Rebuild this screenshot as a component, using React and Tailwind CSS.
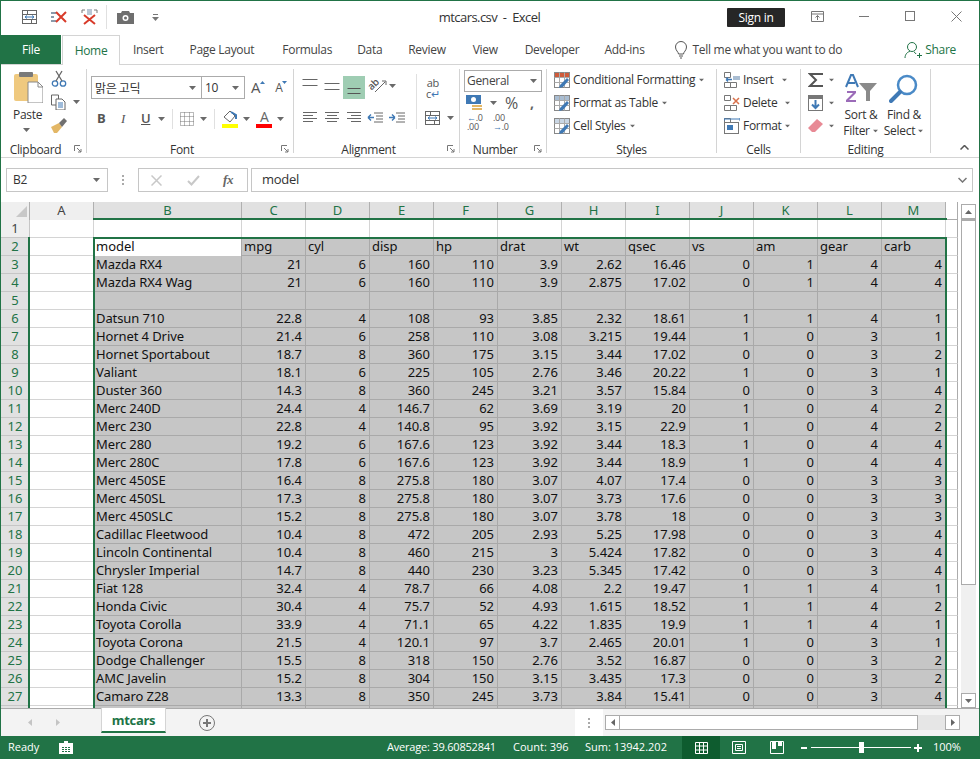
import React from "react";

const ui = { fontFamily: '"Open Sans", "Noto Sans", sans-serif' };

const columns = [
  { name: "A", w: "w-[64px]" },
  { name: "B", w: "w-[148px]" },
  { name: "C", w: "w-[64px]" },
  { name: "D", w: "w-[64px]" },
  { name: "E", w: "w-[64px]" },
  { name: "F", w: "w-[64px]" },
  { name: "G", w: "w-[64px]" },
  { name: "H", w: "w-[64px]" },
  { name: "I", w: "w-[64px]" },
  { name: "J", w: "w-[64px]" },
  { name: "K", w: "w-[64px]" },
  { name: "L", w: "w-[64px]" },
  { name: "M", w: "w-[64px]" },
];

const head = ["model", "mpg", "cyl", "disp", "hp", "drat", "wt", "qsec", "vs", "am", "gear", "carb"];

const rows = [
  ["Mazda RX4", 21, 6, 160, 110, 3.9, 2.62, 16.46, 0, 1, 4, 4],
  ["Mazda RX4 Wag", 21, 6, 160, 110, 3.9, 2.875, 17.02, 0, 1, 4, 4],
  null,
  ["Datsun 710", 22.8, 4, 108, 93, 3.85, 2.32, 18.61, 1, 1, 4, 1],
  ["Hornet 4 Drive", 21.4, 6, 258, 110, 3.08, 3.215, 19.44, 1, 0, 3, 1],
  ["Hornet Sportabout", 18.7, 8, 360, 175, 3.15, 3.44, 17.02, 0, 0, 3, 2],
  ["Valiant", 18.1, 6, 225, 105, 2.76, 3.46, 20.22, 1, 0, 3, 1],
  ["Duster 360", 14.3, 8, 360, 245, 3.21, 3.57, 15.84, 0, 0, 3, 4],
  ["Merc 240D", 24.4, 4, 146.7, 62, 3.69, 3.19, 20, 1, 0, 4, 2],
  ["Merc 230", 22.8, 4, 140.8, 95, 3.92, 3.15, 22.9, 1, 0, 4, 2],
  ["Merc 280", 19.2, 6, 167.6, 123, 3.92, 3.44, 18.3, 1, 0, 4, 4],
  ["Merc 280C", 17.8, 6, 167.6, 123, 3.92, 3.44, 18.9, 1, 0, 4, 4],
  ["Merc 450SE", 16.4, 8, 275.8, 180, 3.07, 4.07, 17.4, 0, 0, 3, 3],
  ["Merc 450SL", 17.3, 8, 275.8, 180, 3.07, 3.73, 17.6, 0, 0, 3, 3],
  ["Merc 450SLC", 15.2, 8, 275.8, 180, 3.07, 3.78, 18, 0, 0, 3, 3],
  ["Cadillac Fleetwood", 10.4, 8, 472, 205, 2.93, 5.25, 17.98, 0, 0, 3, 4],
  ["Lincoln Continental", 10.4, 8, 460, 215, 3, 5.424, 17.82, 0, 0, 3, 4],
  ["Chrysler Imperial", 14.7, 8, 440, 230, 3.23, 5.345, 17.42, 0, 0, 3, 4],
  ["Fiat 128", 32.4, 4, 78.7, 66, 4.08, 2.2, 19.47, 1, 1, 4, 1],
  ["Honda Civic", 30.4, 4, 75.7, 52, 4.93, 1.615, 18.52, 1, 1, 4, 2],
  ["Toyota Corolla", 33.9, 4, 71.1, 65, 4.22, 1.835, 19.9, 1, 1, 4, 1],
  ["Toyota Corona", 21.5, 4, 120.1, 97, 3.7, 2.465, 20.01, 1, 0, 3, 1],
  ["Dodge Challenger", 15.5, 8, 318, 150, 2.76, 3.52, 16.87, 0, 0, 3, 2],
  ["AMC Javelin", 15.2, 8, 304, 150, 3.15, 3.435, 17.3, 0, 0, 3, 2],
  ["Camaro Z28", 13.3, 8, 350, 245, 3.73, 3.84, 15.41, 0, 0, 3, 4],
];

const Caret = ({ className = "" }) => (
  <svg width="7" height="4" viewBox="0 0 7 4" className={className}>
    <path d="M0 0h7L3.5 4z" fill="#6a6a6a" />
  </svg>
);

const Launcher = () => (
  <svg width="8" height="8" viewBox="0 0 8 8" className="absolute right-[4px] bottom-[0px]" fill="none" stroke="#777">
    <path d="M.5 6V.5H6" />
    <path d="M3 3l4 4M7 4v3H4" />
  </svg>
);

const Group = ({ label, w, children, launcher }) => (
  <div className={`${w} relative flex flex-col border-r border-[#d4d4d4] mt-[4px] mb-[4px]`}>
    <div className="flex-1 min-h-0">{children}</div>
    <div className={`h-[18px] mb-[-6px] text-center text-[12px] leading-[18px] text-[#333] ${launcher ? "pr-[16px]" : ""}`}>{label}</div>
    {launcher && <Launcher />}
  </div>
);

const Lines = ({ widths, gap = 3, align = "left", color = "#666" }) => (
  <svg width="16" height="14" viewBox="0 0 16 14">
    {widths.map((w, i) => (
      <rect
        key={i}
        x={align === "left" ? 1 : align === "right" ? 15 - w : 8 - w / 2}
        y={1 + i * gap}
        width={w}
        height="1"
        fill={color}
      />
    ))}
  </svg>
);

const WrapIcon = () => (
  <svg width="16" height="16" viewBox="0 0 16 16" fill="none">
    <rect x=".5" y="1.5" width="14" height="13" fill="#fff" stroke="#666" />
    <path d="M.5 5.500h14M.5 10.500h14M5.500 1.500v4M9.500 10.500v4" stroke="#666" />
    <path d="M3 8h9M3 8l2-1.500M3 8l2 1.500M12 8l-2-1.500M12 8l-2 1.500" stroke="#3f79b5" />
  </svg>
);

const ClearIcon = ({ vertical }) => (
  <svg width="17" height="16" viewBox="0 0 17 16" fill="none">
    {vertical ? (
      <>
        <path d="M1 4V1h3M16 4V1h-3" stroke="#777" />
        <rect x="6" y="0" width="5" height="6" fill="#b9c6d4" />
        <path d="M3 6l11 9M14 6L3 15" stroke="#d83b2a" strokeWidth="2" />
      </>
    ) : (
      <>
        <path d="M1 4h5M1 12h5M1 8h3" stroke="#8a9aaa" strokeWidth="2" />
        <path d="M6 3l10 10M16 3L6 13" stroke="#d83b2a" strokeWidth="2" />
      </>
    )}
  </svg>
);

function TitleBar() {
  return (
    <div className="h-[34px] flex items-center relative shrink-0">
      <div className="flex items-center ml-[21px] w-[140px] h-full">
        <div className="w-[16px] mt-[-2px]"><WrapIcon /></div>
        <div className="ml-[12px] mt-[-3px]"><ClearIcon /></div>
        <div className="ml-[14px] mt-[-3px]"><ClearIcon vertical /></div>
        <div className="w-px h-[24px] bg-[#e0e0e0] ml-[8px] mt-[-2px]" />
        <svg width="17" height="14" viewBox="0 0 17 14" className="ml-[10px] mt-[-2px]">
          <path d="M0 3h4l1-2h7l1 2h4v11H0z" fill="#6e6e6e" />
          <circle cx="8.500" cy="8" r="3" fill="#fff" />
          <circle cx="8.500" cy="8" r="1.500" fill="#6e6e6e" />
        </svg>
        <svg width="7" height="7" viewBox="0 0 7 7" className="ml-[18px] mt-[-1px]">
          <path d="M0 3h7L3.500 7z" fill="#777" />
          <rect x="1" y="0" width="5" height="1" fill="#777" />
        </svg>
      </div>
      <div className="flex-1 text-center text-[13px] tracking-[-0.55px] text-[#333] pl-[90px] mt-[-1px]">mtcars.csv&nbsp; - &nbsp;Excel</div>
      <div className="flex items-center mt-[-2px]">
        <div className="w-[58px] h-[19px] bg-[#262626] rounded-[1px] text-white text-[12px] leading-[19px] text-center">Sign in</div>
        <svg width="13" height="11" viewBox="0 0 13 11" fill="none" className="ml-[26px] mt-[-2px]">
          <path d="M.5.500h12v10H.5zM.5 3h12M6.500 9V4.500M4.500 6.500l2-2 2 2" stroke="#777" />
        </svg>
        <div className="w-[10px] h-px bg-[#777] ml-[35px] mt-[-2px]" />
        <div className="w-[10px] h-[10px] border border-[#777] ml-[36px] mt-[-2px]" />
        <svg width="11" height="11" viewBox="0 0 11 11" fill="none" stroke="#777" className="ml-[36px] mr-[17px] mt-[-2px]">
          <path d="M.5.500l10 10M10.500.500l-10 10" />
        </svg>
      </div>
    </div>
  );
}

function TabBar() {
  const tabs = [
    ["Insert", "ml-[13px]"],
    ["Page Layout", "ml-[26px]"],
    ["Formulas", "ml-[28px]"],
    ["Data", "ml-[25px]"],
    ["Review", "ml-[26px]"],
    ["View", "ml-[27px]"],
    ["Developer", "ml-[27px]"],
    ["Add-ins", "ml-[25px]"],
  ];
  return (
    <div className="h-[30px] flex items-stretch text-[12px] text-[#444] relative shrink-0 border-b border-[#d4d4d4]">
      <div className="w-[60px] h-[29px] bg-[#217346] text-white flex items-center justify-center">File</div>
      <div className="w-[58px] h-[30px] ml-[1px] bg-white border border-b-0 border-[#d4d4d4] text-[#217346] flex items-center justify-center">Home</div>
      {tabs.map(([t, m]) => (
        <div key={t} className={`${m} flex items-center h-[29px]`}>{t}</div>
      ))}
      <div className="flex items-center h-[29px] ml-[29px]">
        <svg width="14" height="18" viewBox="0 0 14 18" fill="none" stroke="#555">
          <path d="M4.500 13c0-2-3-3.500-3-7a5.500 5.500 0 0 1 11 0c0 3.500-3 5-3 7zM5 15h4M6 17h2" />
        </svg>
        <span className="ml-[5px]">Tell me what you want to do</span>
      </div>
      <div className="flex items-center h-[29px] ml-[auto] mr-[23px] text-[#217346]">
        <svg width="19" height="18" viewBox="0 0 19 18" fill="none" stroke="#217346">
          <circle cx="8" cy="6" r="4.500" />
          <path d="M1 17c0-4 3-6.500 5-6.500M10 11c1 .5 1.500 1 2 2M13 14.500h5M15.500 12v5" />
        </svg>
        <span className="ml-[2px]">Share</span>
      </div>
    </div>
  );
}

function ClipboardGroup() {
  return (
    <div className="flex pl-[12px] pt-[2px]">
      <div className="w-[38px] flex flex-col items-start">
        <svg width="30" height="32" viewBox="0 0 30 32">
          <rect x="1" y="3" width="24" height="27" rx="2" fill="#efc97f" />
          <rect x="6" y="1" width="14" height="5" rx="1" fill="#7a7a7a" />
          <path d="M15 11h10l5 5v16H15z" fill="#fff" stroke="#888" />
          <path d="M25 11v5h5" fill="none" stroke="#888" />
        </svg>
        <span className="text-[12px] leading-[16px] mt-[4px] text-[#333]">Paste</span>
        <Caret className="ml-[10px] mt-[5px]" />
      </div>
      <div className="flex flex-col mt-[-1px] gap-[7px] items-start">
        <svg width="16" height="17" viewBox="0 0 16 17" fill="none" stroke="#3f79b5" strokeWidth="1.300">
          <circle cx="4" cy="13.500" r="2.700" />
          <circle cx="12" cy="13.500" r="2.700" />
          <path d="M5 11L11 1M11 11L5 1" stroke="#666" />
        </svg>
        <div className="flex items-center">
          <svg width="15" height="16" viewBox="0 0 15 16" fill="#fff" stroke="#666">
            <path d="M.5 1h7v10h-7z" />
            <path d="M5 5h6l3 3v8H5z" />
            <path d="M7 9h5M7 11h5M7 13h5" stroke="#3f79b5" />
          </svg>
          <Caret className="ml-[7px]" />
        </div>
        <svg width="16" height="15" viewBox="0 0 16 15" className="mt-[1px]">
          <path d="M0 9l8-4 3 4-5 6H3z" fill="#e3b766" />
          <path d="M8 5l5-5 3 3-5 6z" fill="#707070" />
        </svg>
      </div>
    </div>
  );
}

function FontGroup() {
  return (
    <div className="pl-[4px] pt-[7px]">
      <div className="flex items-center">
        <div className="w-[111px] h-[23px] border border-[#ababab] flex items-center justify-between pl-[3px] pr-[5px] text-[12px] text-[#333]" style={{ fontFamily: '"Noto Sans CJK KR", sans-serif' }}>
          맑은 고딕<Caret />
        </div>
        <div className="w-[43px] h-[23px] border border-[#ababab] border-l-0 flex items-center justify-between pl-[3px] pr-[5px] text-[12px] text-[#333]">
          10<Caret />
        </div>
        <div className="flex items-start ml-[6px] text-[#555] text-[14px] leading-[18px]">
          <span className="text-[15px]">A</span>
          <svg width="5" height="3" viewBox="0 0 5 3" className="mt-[3px]"><path d="M0 3h5L2.500 0z" fill="#3f79b5" /></svg>
          <span className="ml-[10px] mt-[1px] text-[12px]">A</span>
          <svg width="5" height="3" viewBox="0 0 5 3" className="mt-[3px]"><path d="M0 0h5L2.500 3z" fill="#3f79b5" /></svg>
        </div>
      </div>
      <div className="flex items-center mt-[9px] h-[22px] text-[#555]">
        <span className="ml-[6px] w-[14px] font-bold text-[13px]">B</span>
        <span className="ml-[10px] w-[12px] italic text-[13px]" style={{ fontFamily: '"Liberation Serif", serif' }}>I</span>
        <span className="ml-[8px] underline text-[13px] font-semibold">U</span>
        <Caret className="ml-[8px]" />
        <div className="w-px h-[20px] bg-[#e0e0e0] ml-[7px]" />
        <svg width="14" height="14" viewBox="0 0 14 14" fill="none" stroke="#777" strokeDasharray="1 1" className="ml-[7px]">
          <path d="M.5.500h13v13h-13zM.500 4.500h13M.500 9.500h13M4.500.500v13M9.500.500v13" />
        </svg>
        <Caret className="ml-[6px]" />
        <div className="w-px h-[20px] bg-[#e0e0e0] ml-[7px]" />
        <div className="ml-[7px] w-[16px] flex flex-col items-center">
          <svg width="14" height="14" viewBox="0 0 14 14" fill="none">
            <path d="M1 7l6-6 5 5-5 6z" fill="#fff" stroke="#666" />
            <path d="M8 2l5 3v4" stroke="#3f79b5" strokeWidth="2" />
          </svg>
          <div className="w-[16px] h-[4px] bg-[#ffff00]" />
        </div>
        <Caret className="ml-[5px]" />
        <div className="ml-[6px] w-[16px] flex flex-col items-center">
          <span className="text-[14px] leading-[14px] text-[#666]">A</span>
          <div className="w-[16px] h-[4px] bg-[#ff0000]" />
        </div>
        <Caret className="ml-[5px]" />
      </div>
    </div>
  );
}

function AlignGroup() {
  return (
    <div className="pl-[5px] pt-[4px] flex">
      <div className="grid grid-cols-[22px_22px_22px_44px] auto-rows-[30px] items-center justify-items-center w-[110px]">
        <div className="self-start mt-[5px]"><Lines widths={[15, 15]} gap={6} align="center" /></div>
        <div className="self-start mt-[9px]"><Lines widths={[15, 15]} gap={6} align="center" /></div>
        <div className="self-start w-[22px] h-[23px] bg-[#9fcdb3] flex items-start justify-center pt-[11px] mt-[3px]"><Lines widths={[13, 13]} gap={5} align="center" color="#555" /></div>
        <div className="flex items-center justify-self-start ml-[2px] self-start mt-[5px]">
          <div className="relative w-[20px] h-[16px]">
            <span className="absolute left-[0px] top-[-1px] text-[10px] leading-[14px] font-semibold text-[#555] -rotate-45">ab</span>
            <svg width="20" height="16" viewBox="0 0 20 16" fill="none" stroke="#666" className="absolute left-0 top-0">
              <path d="M8 14L18 4M15 3h4v4" />
            </svg>
          </div>
          <Caret className="ml-[2px]" />
        </div>
        <Lines widths={[14, 10, 14, 10]} />
        <Lines widths={[14, 10, 14, 10]} align="center" />
        <Lines widths={[14, 10, 14, 10]} align="right" />
        <div className="flex items-center justify-self-start ml-[2px] gap-[6px]">
          <svg width="16" height="12" viewBox="0 0 16 12" fill="none">
            <path d="M7 1h9M9 4h7M9 7h7M7 10h9" stroke="#666" />
            <path d="M7 5.500H1M1 5.500l3-3M1 5.500l3 3" stroke="#3f79b5" strokeWidth="1.400" />
          </svg>
          <svg width="16" height="12" viewBox="0 0 16 12" fill="none">
            <path d="M7 1h9M9 4h7M9 7h7M7 10h9" stroke="#666" />
            <path d="M0 5.500h6M6 5.500l-3-3M6 5.500l-3 3" stroke="#3f79b5" strokeWidth="1.400" />
          </svg>
        </div>
      </div>
      <div className="w-px h-[55px] bg-[#e0e0e0] ml-[7px] mt-[1px]" />
      <div className="flex flex-col ml-[8px] mt-[-2px] items-start">
        <div className="text-[11px] leading-[11px] text-[#555] text-center mt-[6px] ml-[1px]">ab<br />c<span className="text-[#3f79b5]">↵</span></div>
        <div className="flex items-center mt-[11px]">
          <WrapIcon />
          <Caret className="ml-[6px]" />
        </div>
      </div>
    </div>
  );
}

function NumberGroup() {
  return (
    <div className="pl-[4px] pt-[1px]">
      <div className="w-[78px] h-[22px] border border-[#ababab] flex items-center justify-between pl-[2px] pr-[4px] text-[12px] text-[#444]">
        General<Caret />
      </div>
      <div className="flex items-center mt-[3px] h-[16px]">
        <svg width="16" height="16" viewBox="0 0 16 16" className="ml-[2px]">
          <rect x="0" y="0" width="15" height="9" fill="#3f79b5" />
          <circle cx="7.500" cy="4.500" r="2.500" fill="#fff" />
          <rect x="6" y="10" width="10" height="2" fill="#e3b766" />
          <rect x="6" y="13" width="10" height="2" fill="#e3b766" />
        </svg>
        <Caret className="ml-[8px]" />
        <span className="ml-[8px] text-[16px] leading-[16px] text-[#555]">%</span>
        <span className="ml-[12px] text-[14px] leading-[12px] font-bold text-[#666]">,</span>
      </div>
      <div className="flex items-center mt-[2px] ml-[3px] text-[9px] leading-[9px] text-[#555]">
        <div className="w-[16px]"><span className="text-[#3f79b5]">←</span>.0<br />.00</div>
        <div className="w-[16px] ml-[10px]">.00<br /><span className="text-[#3f79b5]">→</span>.0</div>
      </div>
    </div>
  );
}

const StyleIcon = ({ top }) => (
  <svg width="16" height="16" viewBox="0 0 16 16" fill="none">
    <rect x=".5" y=".5" width="15" height="15" fill="#fff" stroke="#888" />
    <rect x="1" y="1" width="14" height="4" fill={top} />
    <path d="M.5 5.500h15M.5 10.500h15M5.500.500v15M10.500.500v15" stroke="#aaa" />
    <path d="M5 16l4-1 6-7-2-2-7 7z" fill="#3f79b5" />
  </svg>
);

function StylesGroup() {
  const items = [
    ["Conditional Formatting", "#cf5b3b"],
    ["Format as Table", "#a9bdd2"],
    ["Cell Styles", "#c9d6e4"],
  ];
  return (
    <div className="pl-[7px] pt-[3px] flex flex-col gap-[7px]">
      {items.map(([t, c]) => (
        <div key={t} className="flex items-center h-[16px] text-[12px] text-[#333]">
          <StyleIcon top={c} />
          <span className="ml-[3px]">{t}</span>
          <Caret className="ml-[3px] scale-75" />
        </div>
      ))}
    </div>
  );
}

const CellIcon = ({ color, arrow }) => (
  <svg width="16" height="16" viewBox="0 0 16 16" fill="none">
    <path d="M.5.500h6v5h-6zM.500 10.500h6v5h-6zM6.500 10.500h6v5h-6z" stroke="#777" />
    {arrow === "x" ? (
      <path d="M9 3l6 6M15 3L9 9" stroke={color} strokeWidth="1.500" />
    ) : arrow === "in" ? (
      <>
        <rect x="9" y="4" width="7" height="4" fill="#a9bdd2" />
        <path d="M2 7.500h6M2 7.500l2-2M2 7.500l2 2" stroke={color} strokeWidth="1.300" />
      </>
    ) : (
      <>
        <path d="M0 1h16M0 0v3M16 0v3" stroke={color} />
        <rect x=".5" y="4.500" width="14" height="11" fill="#fff" stroke="#777" />
        <rect x="3" y="7" width="6" height="5" fill="#3f79b5" />
      </>
    )}
  </svg>
);

function CellsGroup() {
  const items = [
    ["Insert", "in", "#3f79b5", "ml-[7px]"],
    ["Delete", "x", "#d8704a", "ml-[7px]"],
    ["Format", "f", "#3f79b5", "ml-[2px]"],
  ];
  return (
    <div className="pl-[7px] pt-[3px] flex flex-col gap-[7px]">
      {items.map(([t, a, c, m]) => (
        <div key={t} className="flex items-center h-[16px] text-[12px] text-[#333]">
          <CellIcon arrow={a} color={c} />
          <span className="ml-[3px]">{t}</span>
          <Caret className={`${m} scale-75`} />
        </div>
      ))}
    </div>
  );
}

function EditingGroup() {
  return (
    <div className="flex pl-[7px] pt-[2px]">
      <div className="flex flex-col gap-[7px] w-[34px] mt-[1px]">
        <div className="flex items-center h-[16px]">
          <svg width="16" height="16" viewBox="0 0 16 16" fill="none" stroke="#555" strokeWidth="2">
            <path d="M15 2H2l6 6-6 6h13" />
          </svg>
          <Caret className="ml-[4px] scale-75" />
        </div>
        <div className="flex items-center h-[16px]">
          <svg width="16" height="16" viewBox="0 0 16 16" fill="none">
            <rect x=".5" y=".5" width="14" height="15" fill="#fff" stroke="#777" />
            <rect x="1" y="1" width="13" height="3" fill="#777" />
            <path d="M7.500 5v8M4 9.500l3.500 3.500L11 9.500" stroke="#3f79b5" strokeWidth="2" />
          </svg>
          <Caret className="ml-[4px] scale-75" />
        </div>
        <div className="flex items-center h-[16px]">
          <svg width="16" height="14" viewBox="0 0 16 14"><path d="M0 9l9-9 6 5-8 8H4z" fill="#e88a95" /></svg>
          <Caret className="ml-[4px] scale-75" />
        </div>
      </div>
      <div className="w-[42px] flex flex-col items-center text-[12px] leading-[16px] text-[#333] ml-[-2px] mt-[-1px]">
        <div className="h-[34px] flex items-end text-[17px] leading-[14px]">
          <svg width="32" height="30" viewBox="0 0 32 30">
            <path d="M1 13L6 1h2l5 12M3 9h7" fill="none" stroke="#3f79b5" strokeWidth="2" />
            <path d="M2 17h9v2l-7 7h7v2H1v-2l7-7H2z" fill="#9b6bb8" />
            <path d="M14 9h18l-7 8v10h-4V17z" fill="#8a8a8a" />
          </svg>
        </div>
        <span className="mt-[3px]">Sort &amp;</span>
        <span className="flex items-center">Filter<Caret className="ml-[2px] scale-75" /></span>
      </div>
      <div className="w-[42px] flex flex-col items-center text-[12px] leading-[16px] text-[#333] ml-[1px] mt-[-1px]">
        <svg width="30" height="30" viewBox="0 0 30 30" fill="none" className="mt-[4px]">
          <circle cx="18" cy="11" r="9" stroke="#4a8ac7" strokeWidth="2.500" />
          <path d="M11 18L2 27" stroke="#3f79b5" strokeWidth="4" strokeLinecap="round" />
        </svg>
        <span className="mt-[3px]">Find &amp;</span>
        <span className="flex items-center">Select<Caret className="ml-[2px] scale-75" /></span>
      </div>
    </div>
  );
}

function Ribbon() {
  return (
    <div className="h-[93px] flex items-stretch border-b border-[#d4d4d4] relative shrink-0 bg-white">
      <Group label="Clipboard" w="w-[86px]" launcher><ClipboardGroup /></Group>
      <Group label="Font" w="w-[207px]" launcher><FontGroup /></Group>
      <Group label="Alignment" w="w-[166px]" launcher><AlignGroup /></Group>
      <Group label="Number" w="w-[87px]" launcher><NumberGroup /></Group>
      <Group label="Styles" w="w-[170px]"><StylesGroup /></Group>
      <Group label="Cells" w="w-[84px]"><CellsGroup /></Group>
      <Group label="Editing" w="w-[130px]"><EditingGroup /></Group>
      <svg width="9" height="5" viewBox="0 0 9 5" fill="none" stroke="#555" strokeWidth="1.500" className="absolute right-[10px] bottom-[7px]">
        <path d="M.5 4.500l4-4 4 4" />
      </svg>
    </div>
  );
}

function FormulaBar() {
  return (
    <div className="h-[44px] flex items-start pt-[10px] bg-[#fff] shrink-0 pl-[5px] pr-[6px]">
      <div className="w-[102px] h-[24px] border border-[#c6c6c6] flex items-center justify-between pl-[6px] pr-[7px] text-[12px] text-[#333]">
        B2
        <Caret />
      </div>
      <div className="w-[30px] h-[24px] flex flex-col items-center justify-center gap-[2px]">
        <div className="w-[2px] h-[2px] bg-[#aaa]" />
        <div className="w-[2px] h-[2px] bg-[#aaa]" />
        <div className="w-[2px] h-[2px] bg-[#aaa]" />
      </div>
      <div className="w-[110px] h-[24px] border border-[#c6c6c6] flex items-center">
        <svg width="11" height="11" viewBox="0 0 11 11" fill="none" stroke="#c8c8c8" strokeWidth="1.500" className="ml-[12px]">
          <path d="M.5.500l10 10M10.500.500l-10 10" />
        </svg>
        <svg width="13" height="11" viewBox="0 0 13 11" fill="none" stroke="#c8c8c8" strokeWidth="2" className="ml-[25px]">
          <path d="M1 6l3.500 3.500L12 1" />
        </svg>
        <span className="ml-[23px] text-[13px] italic font-bold text-[#666]" style={{ fontFamily: '"Liberation Serif", serif' }}>fx</span>
      </div>
      <div className="flex-1 h-[24px] ml-[3px] border border-[#c6c6c6] flex items-center justify-between pl-[10px] pr-[5px] text-[13px] text-[#333]">
        model
        <svg width="9" height="6" viewBox="0 0 9 6" fill="none" stroke="#777" strokeWidth="1.500">
          <path d="M.5 1l4 4 4-4" />
        </svg>
      </div>
    </div>
  );
}

function Sheet() {
  const sel = "border-r border-b border-[#a9a9a9]";
  const plain = "border-r border-b border-[#d4d4d4]";
  const edge = "w-[12px] border-r border-r-[#ababab] border-b border-b-[#d4d4d4]";
  return (
    <div className="relative flex-1 min-h-0 flex overflow-hidden tracking-normal" style={{ fontFamily: '"Noto Sans", "Open Sans", sans-serif' }}>
      <div className="w-[957px] shrink-0 overflow-hidden relative">
        {/* column header */}
        <div className="flex h-[18px] text-[13px] leading-[16px]">
          <div className="w-[29px] bg-[#efefef] border-r border-[#b0b0b0] relative">
            <svg width="11" height="11" viewBox="0 0 11 11" className="absolute right-[2px] bottom-[3px]"><path d="M11 0v11H0z" fill="#c8c8c8" /></svg>
          </div>
          {columns.map((c) => (
            <div key={c.name} className={`${c.w} text-center border-r border-[#b0b0b0] ${c.name === "A" ? "bg-[#efefef] text-[#444]" : "bg-[#e1e1e1] text-[#217346]"}`}>{c.name}</div>
          ))}
          <div className="w-[12px] border-b border-b-[#ababab] border-r border-r-[#ababab]" />
        </div>
        {/* row 1 */}
        <div className="flex h-[18px] text-[13px] leading-[17px]">
          <div className="w-[29px] bg-[#efefef] border-r border-b border-[#c6c6c6] text-center text-[#444]">1</div>
          {columns.map((c) => <div key={c.name} className={`${c.w} ${plain}`} />)}
          <div className={edge} />
        </div>
        {/* row 2 */}
        <div className="flex h-[18px] text-[13px] leading-[17px] text-[#111]">
          <div className="w-[29px] bg-[#e1e1e1] border-r border-b border-[#c6c6c6] text-center text-[#217346]">2</div>
          <div className={`w-[64px] ${plain}`} />
          <div className="w-[148px] pl-[2px] border-r border-[#a9a9a9]">{head[0]}</div>
          {head.slice(1).map((h) => (
            <div key={h} className={`w-[64px] pl-[2px] bg-[#c6c6c6] ${sel}`}>{h}</div>
          ))}
          <div className={edge} />
        </div>
        {rows.map((r, i) => (
          <div key={i} className="flex h-[18px] text-[13px] leading-[17px] text-[#111]">
            <div className="w-[29px] bg-[#e1e1e1] border-r border-b border-[#c6c6c6] text-center text-[#217346]">{i + 3}</div>
            <div className={`w-[64px] ${plain}`} />
            <div className={`w-[148px] pl-[2px] bg-[#c6c6c6] ${sel} whitespace-nowrap tracking-[-0.1px]`}>{r ? r[0] : ""}</div>
            {Array.from({ length: 11 }).map((_, j) => (
              <div key={j} className={`w-[64px] pr-[3px] text-right bg-[#c6c6c6] ${sel}`}>{r ? r[j + 1] : ""}</div>
            ))}
            <div className={edge} />
          </div>
        ))}
        <div className="flex h-[18px]">
          <div className="w-[29px] bg-[#e1e1e1] border-r border-[#c6c6c6]" />
          <div className="w-[64px] border-r border-[#d4d4d4]" />
          <div className="w-[148px] bg-[#c6c6c6] border-r border-[#a9a9a9]" />
          {Array.from({ length: 11 }).map((_, j) => (
            <div key={j} className="w-[64px] bg-[#c6c6c6] border-r border-[#a9a9a9]" />
          ))}
          <div className="w-[12px] border-r border-[#ababab]" />
        </div>
        {/* selection outline */}
        <div className="absolute left-[92px] w-[854px] top-[35px] bottom-[-6px] border-2 border-[#217346] pointer-events-none" />
        <div className="absolute left-[92px] w-[854px] top-[16px] h-[2px] bg-[#217346]" />
        <div className="absolute left-[27px] w-[2px] top-[35px] bottom-0 bg-[#217346]" />
      </div>
      {/* vertical scrollbar */}
      <div className="ml-[3px] w-[15px] flex flex-col pt-[2px] bg-[#fff]">
        <div className="h-[15px] border border-[#ababab] flex items-center justify-center">
          <svg width="7" height="4" viewBox="0 0 7 4"><path d="M0 4h7L3.500 0z" fill="#666" /></svg>
        </div>
        <div className="h-[366px] border border-[#ababab] border-t-2 bg-white" />
        <div className="flex-1 bg-[#f0f0f0]" />
        <div className="h-[15px] border border-[#ababab] flex items-center justify-center">
          <Caret />
        </div>
      </div>
    </div>
  );
}

function SheetTabs() {
  return (
    <div className="h-[28px] flex items-start bg-[#f3f3f3] shrink-0 border-t border-[#ababab]">
      <div className="flex items-center h-[26px] ml-[27px] gap-[24px]">
        <svg width="4" height="7" viewBox="0 0 4 7"><path d="M4 0v7L0 3.500z" fill="#c4c4c4" /></svg>
        <svg width="4" height="7" viewBox="0 0 4 7"><path d="M0 0v7l4-3.500z" fill="#c4c4c4" /></svg>
      </div>
      <div className="ml-[41px] mt-[-1px] w-[65px] h-[25px] bg-white border-x border-[#d4d4d4] border-b-2 border-b-[#217346] text-[#217346] font-bold text-[13px] leading-[24px] text-center">mtcars</div>
      <div className="ml-[33px] mt-[6px] w-[16px] h-[16px] rounded-full border border-[#777] flex items-center justify-center">
        <svg width="8" height="8" viewBox="0 0 8 8"><path d="M3 0h2v3h3v2H5v3H3V5H0V3h3z" fill="#777" /></svg>
      </div>
      <div className="ml-[360px] w-[28px] h-[27px] bg-white flex flex-col items-center justify-center gap-[2px]">
        <div className="w-[2px] h-[2px] bg-[#aaa]" />
        <div className="w-[2px] h-[2px] bg-[#aaa]" />
        <div className="w-[2px] h-[2px] bg-[#aaa]" />
      </div>
      <div className="flex ml-[2px] mt-[6px] h-[15px] w-[355px]">
        <div className="w-[15px] border border-[#ababab] bg-white flex items-center justify-center">
          <svg width="4" height="7" viewBox="0 0 4 7"><path d="M4 0v7L0 3.500z" fill="#666" /></svg>
        </div>
        <div className="w-[298px] border border-[#ababab] border-l-0 bg-white" />
        <div className="flex-1 bg-[#e6e6e6]" />
        <div className="w-[15px] border border-[#ababab] bg-white flex items-center justify-center">
          <svg width="4" height="7" viewBox="0 0 4 7"><path d="M0 0v7l4-3.500z" fill="#666" /></svg>
        </div>
      </div>
    </div>
  );
}

function StatusBar() {
  return (
    <div className="h-[23px] flex items-center bg-[#217346] text-white text-[11px] shrink-0 pl-[7px] tracking-normal whitespace-nowrap">
      <span className="w-[50px]">Ready</span>
      <svg width="14" height="13" viewBox="0 0 14 13" className="ml-[1px]">
        <path d="M0 2h5V0h4v2h5v11H0z" fill="#fff" />
        <path d="M3 6h2v1H3zM6 6h2v1H6zM9 6h2v1H9zM3 8h2v1H3zM6 8h2v1H6zM9 8h2v1H9zM3 10h2v1H3zM6 10h2v1H6zM9 10h2v1H9z" fill="#217346" />
      </svg>
      <span className="ml-[314px] w-[126px] tracking-[-0.2px]">Average: 39.60852841</span>
      <span className="w-[72px]">Count: 396</span>
      <span className="w-[97px]">Sum: 13942.202</span>
      <div className="w-[38px] h-full bg-[#0e5c2f] flex items-center justify-center">
        <svg width="13" height="12" viewBox="0 0 13 12" fill="none" stroke="#fff">
          <path d="M.5.500h12v11H.500zM.500 4h12M.500 8h12M4.500.500v11M8.500.500v11" />
        </svg>
      </div>
      <svg width="14" height="13" viewBox="0 0 14 13" fill="none" stroke="#fff" className="ml-[12px]">
        <path d="M.5.500h13v12H.500zM3.500 3.500h7v6h-7zM5 5.500h4M5 7.500h4" />
      </svg>
      <svg width="14" height="13" viewBox="0 0 14 13" fill="none" stroke="#fff" className="ml-[24px]">
        <path d="M.5.500h13v12H.500z" />
        <path d="M2 1h4v7H2zM8 1h4v4H8z" fill="#fff" stroke="none" />
      </svg>
      <div className="ml-[17px] w-[6px] h-[2px] bg-white" />
      <div className="relative ml-[4px] w-[100px] h-px bg-white">
        <div className="absolute left-[48px] top-[-5px] w-[5px] h-[11px] bg-white" />
      </div>
      <svg width="8" height="8" viewBox="0 0 8 8" className="ml-[3px]"><path d="M3 0h2v3h3v2H5v3H3V5H0V3h3z" fill="#fff" /></svg>
      <span className="ml-[11px]">100%</span>
    </div>
  );
}

export default function App() {
  return (
    <div className="w-[980px] h-[759px] bg-white border-x border-t border-[#217346] flex flex-col overflow-hidden tracking-[-0.3px]" style={ui}>
      <TitleBar />
      <TabBar />
      <Ribbon />
      <FormulaBar />
      <Sheet />
      <SheetTabs />
      <StatusBar />
    </div>
  );
}
